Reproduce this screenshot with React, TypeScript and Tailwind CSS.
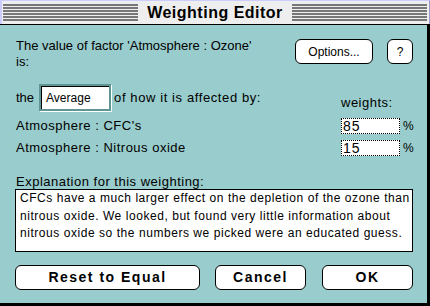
const stripes =
  'h-[18px] flex-1 bg-[repeating-linear-gradient(to_bottom,#777777_0px,#777777_2px,#eeeeee_2px,#eeeeee_3px)]';

const TitleBar = () => (
  <div className="flex h-[25px] shrink-0 flex-col border-b border-black">
    <div className="flex h-[24px] items-center border-l-2 border-t border-r border-l-[#ccccff] border-t-[#ccccff] border-r-[#9999cc] bg-[#eeeeee] pl-px pr-[2px]">
      <div className={stripes} />
      <div className="px-[9px] text-[16px] font-bold leading-[18px] tracking-[0.5px]">Weighting Editor</div>
      <div className={stripes} />
    </div>
  </div>
);

const MacButton = ({ label, className }: { label: string; className: string }) => (
  <button
    className={`flex items-center justify-center rounded-[6px] border border-black bg-white font-bold ${className}`}
  >
    {label}
  </button>
);

const WeightRow = ({ label, value, className }: { label: string; value: string; className: string }) => (
  <div className={`flex h-[16px] items-center ${className}`}>
    <div className="flex-1 text-[13px] leading-[16px] tracking-[0.5px]">{label}</div>
    <div className="h-[16px] w-[59px] border border-dotted border-black bg-white pl-[1px] text-[14px] leading-[14px] tracking-[1px]">
      {value}
    </div>
    <div className="ml-[3px] w-[10px] text-[12px] leading-[16px]">%</div>
  </div>
);

export default function App() {
  return (
    <div className="flex h-[306px] w-[430px] flex-col overflow-hidden bg-[#99cccc] font-['Liberation_Sans',Arial,sans-serif] text-black">
      <TitleBar />
      <div className="flex flex-1 flex-col border-r-[3px] border-b-[3px] border-black pl-4 pr-[14px] pt-[13px]">
        {/* factor line */}
        <div className="flex items-start">
          <div className="flex-1 text-[13px] leading-[16px]">
            The value of factor 'Atmosphere : Ozone'
            <br />
            is:
          </div>
          <MacButton label="Options..." className="mt-px h-[25px] w-[78px] !font-normal text-[12px]" />
          <MacButton label="?" className="ml-[14px] mt-px h-[25px] w-[26px] !font-normal text-[12px]" />
        </div>

        {/* combine method */}
        <div className="mt-[14px] flex items-end justify-between">
          <div className="flex items-center text-[13px] leading-[16px]">
            <span>the</span>
            <div className="ml-[5px] h-[27px] w-[72px] border-2 border-[#5f9595] shadow-[1px_1px_0_#ffffff]">
              <div className="flex h-full items-center border-l border-t border-black bg-white pl-[4px] text-[12px]">
                Average
              </div>
            </div>
            <span className="ml-[3px] tracking-[0.6px]">of how it is affected by:</span>
          </div>
          <div className="w-[72px] text-[13px] leading-[16px] tracking-[0.5px]">weights:</div>
        </div>

        <WeightRow label="Atmosphere : CFC's" value="85" className="mt-[7px]" />
        <WeightRow label="Atmosphere : Nitrous oxide" value="15" className="mt-[6px]" />

        {/* explanation */}
        <div className="mt-[19px] text-[13px] leading-[14px] tracking-[0.5px]">Explanation for this weighting:</div>
        <div className="-ml-px h-[63px] w-[398px] border border-black bg-white pl-[4px] text-[12px] leading-[17.5px] tracking-[0.55px] whitespace-nowrap">
          CFCs have a much larger effect on the depletion of the ozone than
          <br />
          nitrous oxide. We looked, but found very little information about
          <br />
          nitrous oxide so the numbers we picked were an educated guess.
        </div>

        <div className="-ml-px mt-[13px] flex text-[14px] tracking-[1.5px]">
          <MacButton label="Reset to Equal" className="h-[25px] w-[185px]" />
          <MacButton label="Cancel" className="ml-[15px] h-[25px] w-[91px]" />
          <MacButton label="OK" className="ml-[16px] h-[25px] w-[91px]" />
        </div>
      </div>
    </div>
  );
}
